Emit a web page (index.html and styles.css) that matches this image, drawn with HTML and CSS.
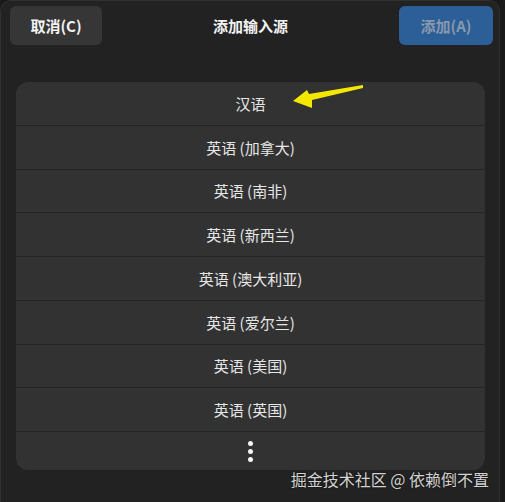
FILE: index.html
```html
<!DOCTYPE html>
<html lang="zh-CN">
<head>
<meta charset="utf-8">
<title>添加输入源</title>
<link rel="stylesheet" href="styles.css">
</head>
<body>
<div class="window">
  <header class="header">
    <button class="btn btn-cancel">取消(C)</button>
    <div class="title">添加输入源</div>
    <button class="btn btn-add">添加(A)</button>
  </header>
  <ul class="list">
    <li class="row">汉语</li>
    <li class="row">英语 (加拿大)</li>
    <li class="row">英语 (南非)</li>
    <li class="row">英语 (新西兰)</li>
    <li class="row">英语 (澳大利亚)</li>
    <li class="row">英语 (爱尔兰)</li>
    <li class="row">英语 (美国)</li>
    <li class="row">英语 (英国)</li>
    <li class="row row-more"><span class="dots"><i></i><i></i><i></i></span></li>
  </ul>
  <svg class="arrow" width="80" height="30" viewBox="0 0 80 30">
    <polygon points="3,16 17,5 19,9 73,0 73,3 22,15 22,23" fill="#f4e800"/>
  </svg>
  <div class="watermark">掘金技术社区 @ 依赖倒不置</div>
</div>
</body>
</html>
```

FILE: styles.css
```css
html, body {
  margin: 0;
  padding: 0;
  background: #1a1a1a;
  height: 100%;
  overflow: hidden;
}
body {
  font-family: "Noto Sans CJK SC", "Noto Sans", sans-serif;
}
.window {
  position: relative;
  box-sizing: border-box;
  width: 500px;
  height: 510px;
  background: #222222;
  border: 1px solid #303030;
  border-radius: 11px 11px 0 0;
}
.header {
  display: grid;
  grid-template-columns: 92px 1fr 94px;
  align-items: center;
  padding: 5px 6px 0 9px;
  height: 39px;
}
.btn {
  height: 39px;
  border: none;
  border-radius: 6px;
  font-family: inherit;
  font-size: 15px;
  font-weight: 700;
  padding: 0;
}
.btn-cancel {
  background: #363636;
  color: #f2f2f2;
}
.btn-add {
  background: #2c5e98;
  color: #8898ad;
}
.title {
  text-align: center;
  color: #f2f2f2;
  font-size: 15px;
  font-weight: 700;
}
.list {
  list-style: none;
  margin: 37px 0 0 15px;
  padding: 0;
  width: 469px;
  background: #323232;
  border-radius: 12px;
  overflow: hidden;
}
.row {
  height: 42.75px;
  border-bottom: 1px solid #242424;
  display: flex;
  align-items: center;
  justify-content: center;
  color: #e6e6e6;
  font-size: 15px;
}
.row-more {
  height: 38px;
  border-bottom: none;
}
.dots {
  display: flex;
  flex-direction: column;
  gap: 3px;
}
.dots i {
  display: block;
  width: 5px;
  height: 5px;
  border-radius: 50%;
  background: #f5f5f5;
}
.arrow {
  position: absolute;
  left: 289px;
  top: 84px;
}
.watermark {
  position: absolute;
  right: 10px;
  top: 466px;
  color: #d2d2d2;
  font-size: 16px;
  text-shadow: 0 0 2px rgba(0,0,0,0.6);
  white-space: nowrap;
}
```
